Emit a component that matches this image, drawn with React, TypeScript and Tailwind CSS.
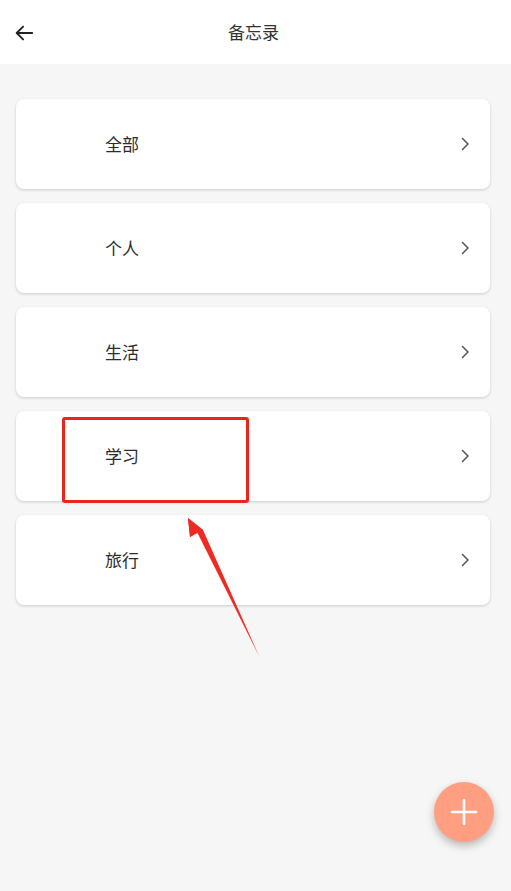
import React from 'react';

const categories = ['全部', '个人', '生活', '学习', '旅行'];

const ChevronRight = () => (
    <svg width="12" height="14" viewBox="0 0 12 14" fill="none">
        <path d="M3.5 1.5L9 7l-5.5 5.5" stroke="#555" strokeWidth="1.5" strokeLinecap="round" strokeLinejoin="round" />
    </svg>
);

const App: React.FC = () => {
    return (
        <div
            className="relative w-[511px] h-[891px] overflow-hidden bg-[#f6f6f6]"
            style={{ fontFamily: '"Noto Sans CJK SC", "Noto Sans", sans-serif' }}
        >
            {/* header */}
            <div className="h-16 bg-white flex items-center relative">
                <button className="absolute left-[12px] top-[21px] w-6 h-6 flex items-center justify-center">
                    <svg width="22" height="22" viewBox="0 0 24 24" fill="none">
                        <path d="M21 12H4M11 5l-7 7 7 7" stroke="#222" strokeWidth="2" strokeLinecap="round" strokeLinejoin="round" />
                    </svg>
                </button>
                <h1 className="w-full text-center text-[17px] text-[#333] font-normal pr-[4px]">备忘录</h1>
            </div>

            {/* list */}
            <div className="pl-4 pr-[21px] pt-[35px] flex flex-col gap-[14px]">
                {categories.map((name) => (
                    <div
                        key={name}
                        className="h-[90px] bg-white rounded-[8px] shadow-[0_1px_3px_rgba(0,0,0,0.18)] flex items-center pl-[89px] pr-[19px]"
                    >
                        <span className="flex-1 text-[17px] text-[#2c2c2c] font-normal">{name}</span>
                        <ChevronRight />
                    </div>
                ))}
            </div>

            {/* annotation box */}
            <div className="absolute left-[62px] top-[417px] w-[187px] h-[86px] border-[3px] border-[#e8261e] rounded-[3px]" />

            {/* annotation arrow */}
            <svg className="absolute left-0 top-0 pointer-events-none" width="511" height="891">
                <polygon points="259,656 203,530 188,518 190,537 197,532" fill="#ee2a22" />
                <polygon points="188,518 203,530 190,537" fill="#ee2a22" />
            </svg>

            {/* FAB */}
            <button className="absolute left-[434px] top-[782px] w-[60px] h-[60px] rounded-full bg-[#ff9e80] shadow-[0_4px_8px_rgba(0,0,0,0.25)] flex items-center justify-center">
                <svg width="28" height="28" viewBox="0 0 28 28">
                    <path d="M14 2v24M2 14h24" stroke="#fff" strokeWidth="2.6" strokeLinecap="round" />
                </svg>
            </button>
        </div>
    );
};

export default App;
